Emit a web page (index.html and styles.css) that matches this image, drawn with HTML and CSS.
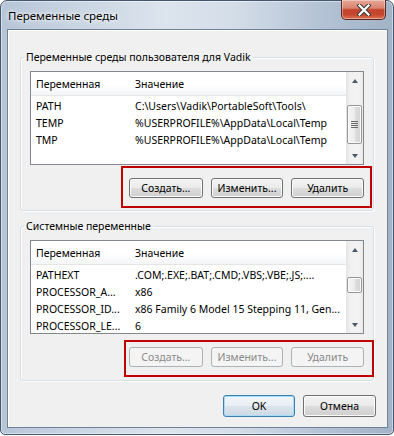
FILE: index.html
```html
<!DOCTYPE html>
<html lang="ru">
<head>
<meta charset="utf-8">
<title>Переменные среды</title>
<link rel="stylesheet" href="styles.css">
</head>
<body>
<div class="window">
  <div class="titlebar">
    <span class="title">Переменные среды</span>
    <div class="close">
      <svg width="14" height="12" viewBox="0 0 14 12"><path d="M2.5 1.5 L11.5 10.5 M11.5 1.5 L2.5 10.5" stroke="#3a3a3a" stroke-width="4.2" stroke-linecap="square"/><path d="M2.5 1.5 L11.5 10.5 M11.5 1.5 L2.5 10.5" stroke="#ffffff" stroke-width="2.2" stroke-linecap="square"/></svg>
    </div>
  </div>
  <div class="client">
    <fieldset class="group">
      <legend>Переменные среды пользователя для Vadik</legend>
      <div class="list">
        <div class="list-body">
          <div class="header"><span class="c1">Переменная</span><span class="c2">Значение</span></div>
          <div class="rows">
            <div class="row"><span class="c1">PATH</span><span class="c2">C:\Users\Vadik\PortableSoft\Tools\</span></div>
            <div class="row"><span class="c1">TEMP</span><span class="c2">%USERPROFILE%\AppData\Local\Temp</span></div>
            <div class="row"><span class="c1">TMP</span><span class="c2">%USERPROFILE%\AppData\Local\Temp</span></div>
          </div>
        </div>
        <div class="scrollbar">
          <div class="sb-btn"><span class="tri up"></span></div>
          <div class="track"><div class="thumb thumb-a"><span class="grip"></span></div></div>
          <div class="sb-btn"><span class="tri down"></span></div>
        </div>
      </div>
      <div class="actions">
        <div class="mark mark-a">
          <button class="btn w74">Создать...</button>
          <button class="btn">Изменить...</button>
          <button class="btn">Удалить</button>
        </div>
      </div>
    </fieldset>

    <fieldset class="group group-b">
      <legend>Системные переменные</legend>
      <div class="list">
        <div class="list-body">
          <div class="header"><span class="c1">Переменная</span><span class="c2">Значение</span></div>
          <div class="rows">
            <div class="row"><span class="c1">PATHEXT</span><span class="c2">.COM;.EXE;.BAT;.CMD;.VBS;.VBE;.JS;....</span></div>
            <div class="row"><span class="c1">PROCESSOR_A...</span><span class="c2">x86</span></div>
            <div class="row"><span class="c1">PROCESSOR_ID...</span><span class="c2">x86 Family 6 Model 15 Stepping 11, Gen...</span></div>
            <div class="row"><span class="c1">PROCESSOR_LE...</span><span class="c2">6</span></div>
          </div>
        </div>
        <div class="scrollbar">
          <div class="sb-btn"><span class="tri up"></span></div>
          <div class="track"><div class="thumb thumb-b"></div></div>
          <div class="sb-btn"><span class="tri down"></span></div>
        </div>
      </div>
      <div class="actions">
        <div class="mark mark-b">
          <button class="btn w74" disabled>Создать...</button>
          <button class="btn" disabled>Изменить...</button>
          <button class="btn" disabled>Удалить</button>
        </div>
      </div>
    </fieldset>

    <div class="dialog-buttons">
      <button class="btn dlg default">OK</button>
      <button class="btn dlg cancel">Отмена</button>
    </div>
  </div>
</div>
</body>
</html>
```
FILE: styles.css
```css
* { box-sizing: border-box; }
html, body { margin: 0; padding: 0; background: #ffffff; }
body {
  width: 394px;
  height: 436px;
  overflow: hidden;
  font-family: "Noto Sans", "Open Sans", sans-serif;
  font-size: 10.5px;
  color: #000;
}
.window {
  width: 394px;
  height: 435px;
  border: 1px solid #45586f;
  border-radius: 7px 7px 5px 5px;
  background:
    linear-gradient(90deg, #b6c5d7 0%, #c9d5e2 20%, #dce4ed 42%, #d3dde8 60%, #b3c2d4 82%, #a2b3c7 100%);
  display: flex;
  flex-direction: column;
  padding: 0 5px 6px 6px;
  box-shadow: inset 0 0 0 1px rgba(255,255,255,0.45);
}
.titlebar {
  height: 28px;
  display: flex;
  align-items: flex-start;
}
.title {
  padding: 7px 0 0 1px;
  font-size: 11.5px;
  line-height: 15px;
  text-shadow: 0 0 6px #fff, 0 0 3px #fff;
}
.close {
  width: 45px;
  height: 20px;
  margin: -1px 2px 0 auto;
  border: 1px solid #5b2a22;
  border-top: none;
  border-radius: 0 0 5px 5px;
  background: linear-gradient(#e8a896 0%, #d98470 42%, #c4432c 52%, #c64831 78%, #de7558 100%);
  box-shadow: inset 0 0 0 1px rgba(255,255,255,0.35);
  display: flex;
  align-items: center;
  justify-content: center;
}
.client {
  flex: 1;
  border: 1px solid #6f8197;
  background: #f0f0f0;
  padding: 20px 12px 0 12px;
  box-shadow: inset 1px 1px 0 #ffffff;
}
.group {
  width: 354px;
  margin: 0;
  border: 1px solid #d5dfe5;
  border-radius: 3px;
  padding: 6px 1px 2px 9px;
  min-width: 0;
  box-shadow: inset 1px 1px 0 #fff, 1px 1px 0 #fff;
}
.group legend {
  padding: 0 2px;
  margin-left: -6px;
  line-height: 15px;
}
.group-b { margin-top: 8px; padding-top: 6px; padding-bottom: 3px; }
.list {
  height: 94px;
  width: 334px;
  border: 1px solid #828790;
  background: #fff;
  display: flex;
  overflow: hidden;
}
.list-body { flex: 1; min-width: 0; }
.header {
  height: 24px;
  display: flex;
  align-items: center;
  border-bottom: 1px solid #e5e5e5;
  background: linear-gradient(#ffffff 0%, #ffffff 55%, #f4f5f7 100%);
}
.rows { padding-top: 1px; }
.row { height: 17px; display: flex; align-items: center; }
.c1 {
  width: 99px;
  flex: none;
  padding-left: 5px;
  white-space: nowrap;
}
.c2 {
  flex: 1;
  min-width: 0;
  padding-left: 5px;
  white-space: nowrap;
}
.scrollbar {
  width: 17px;
  flex: none;
  display: flex;
  flex-direction: column;
  background: linear-gradient(90deg, #e4e4e4 0%, #f1f1f1 25%, #f3f3f3 75%, #e9e9e9 100%);
}
.sb-btn {
  height: 17px;
  flex: none;
  display: flex;
  align-items: center;
  justify-content: center;
}
.tri { width: 0; height: 0; border-left: 3.5px solid transparent; border-right: 3.5px solid transparent; }
.tri.up { border-bottom: 4px solid #4d5a6b; }
.tri.down { border-top: 4px solid #4d5a6b; }
.track { flex: 1; padding: 0 1px; }
.thumb {
  border: 1px solid #979797;
  border-radius: 2px;
  background: linear-gradient(90deg, #f4f4f4 0%, #ececec 50%, #dedede 51%, #d4d4d4 100%);
  box-shadow: inset 0 0 0 1px #fbfbfb;
  display: flex;
  align-items: center;
  justify-content: center;
}
.thumb-a { margin-top: 16px; height: 39px; }
.thumb-b { margin-top: 19px; height: 16px; }
.grip {
  width: 7px;
  height: 7px;
  background: repeating-linear-gradient(#6a6a6a 0 1px, transparent 1px 2px);
}
.actions { display: flex; justify-content: flex-end; }
.mark {
  border: 2px solid #c00000;
  display: flex;
  gap: 8px;
}
.mark-a { margin-top: 1px; width: 251px; padding: 10px 6px 8px 6px; margin-right: 0; }
.mark-b { margin-top: 6px; width: 250px; padding: 5px 8px 8px 3px; margin-right: -2px; }
.btn {
  width: 73px;
  height: 20px;
  padding: 0;
  font: inherit;
  color: #000;
  border: 1px solid #707070;
  border-radius: 3px;
  background: linear-gradient(#f2f2f2 0%, #ebebeb 48%, #dddddd 52%, #cfcfcf 100%);
  box-shadow: inset 0 0 0 1px #fbfbfb;
}
.btn.w74 { width: 74px; }
.btn:disabled {
  color: #8a8a8a;
  border-color: #adb2b5;
  background: #f4f4f4;
  box-shadow: none;
}
.dialog-buttons {
  margin-top: 14px;
  display: flex;
  justify-content: flex-end;
  gap: 8px;
  margin-right: -1px;
}
.btn.dlg { height: 22px; width: 72px; }
.btn.cancel { width: 73px; }
.btn.default {
  border-color: #3c7fb1;
  box-shadow: inset 0 0 0 1px #a7dcf7;
  background: linear-gradient(#f0f5f9 0%, #e9eff4 48%, #dae4ec 52%, #cdd9e3 100%);
}
```
